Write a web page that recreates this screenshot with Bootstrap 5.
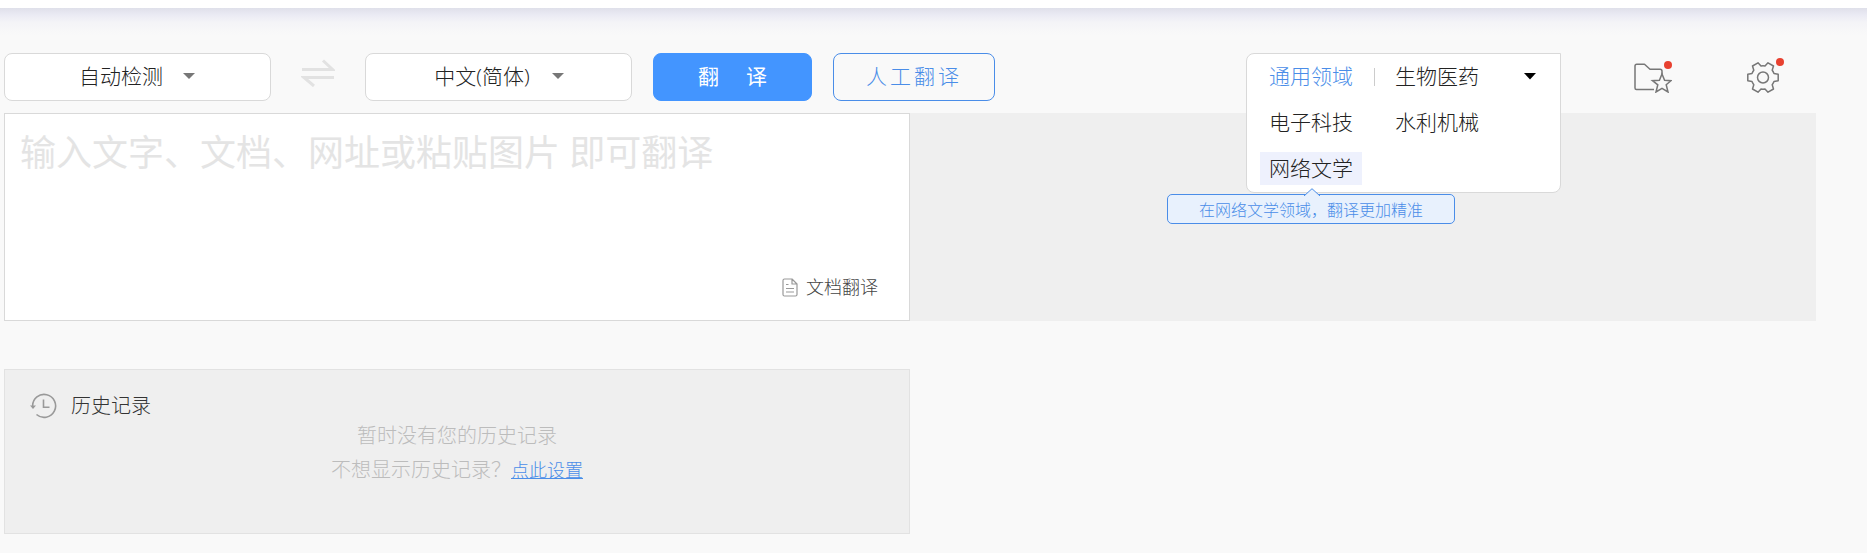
<!DOCTYPE html>
<html lang="zh-CN">
<head>
<meta charset="utf-8">
<meta name="viewport" content="width=device-width, initial-scale=1">
<title>在线翻译</title>
<link href="https://cdn.jsdelivr.net/npm/bootstrap@5.3.0/dist/css/bootstrap.min.css" rel="stylesheet">
<style>
body { background: #f9f9f9; color: #333; font-family: "Open Sans", "Noto Sans CJK SC", sans-serif; font-weight: 300; font-size: 21px; line-height: 28px; }
.top-strip { height: 8px; background: #fff; }
.top-shade { height: 45px; background: linear-gradient(#dfe0ea, #ebebf4 16%, #f4f4f7 32%, #f9f9f9 60%); }
.page-main { padding: 0 51px 16px 4px; }
.toolbar { height: 60px; }
.lang-select { width: 267px; height: 48px; border: 1px solid #d9d9d9; border-radius: 8px; padding: 0 33px 0 0; font-size: 21px; font-weight: 300; color: #222; text-align: center; text-align-last: center; background: #fff url("data:image/svg+xml,%3Csvg xmlns='http://www.w3.org/2000/svg' viewBox='0 0 12 6'%3E%3Cpath d='M0 0h12L6 6z' fill='%23777'/%3E%3C/svg%3E") no-repeat right 75px top 19px / 12px 6px; }
.lang-target { background-position: right 67px top 19px; }
.swap-btn { width: 94px; height: 48px; padding: 0 0 8px; border: 0; background: none; line-height: 0; }
.go-btn, .human-btn { height: 48px; border-radius: 8px; padding: 0; font-size: 21px; font-weight: 400; }
.go-btn { width: 159px; margin-left: 21px; background: #4395ff; border-color: #4395ff; color: #fff; }
.go-btn .gap-wide { gap: 27px; }
.human-btn { width: 162px; margin-left: 21px; border-color: #4a8de8; color: #4a8de8; font-weight: 300; letter-spacing: 3px; }
.domain { width: 315px; height: 48px; margin-right: 73px; }
.domain-panel { z-index: 5; width: 100%; height: 140px; background: #fff; border: 1px solid #d9d9d9; border-radius: 8px 0 8px 8px; padding: 6px 12px 6px 13px; }
.domain-grid { display: grid; grid-template-columns: 102px 24px 102px 1fr; row-gap: 13px; align-items: center; }
.domain-grid a { color: #222; text-decoration: none; text-align: center; line-height: 33px; }
.domain-grid a.active { color: #4a8de8; }
.domain-grid a.hovered { background: #eef1fd; }
.bar-sep { width: 1px; height: 18px; background: #ccc; justify-self: center; }
.open-btn { border: 0; padding: 0; background: none; line-height: 0; justify-self: end; margin-right: 12px; }
.domain-tip { z-index: 6; top: 141px; left: -79px; width: 288px; height: 30px; border: 1px solid #4a8de8; border-radius: 5px; background: #e8f1fd; color: #4a8de8; font-size: 16px; line-height: 30px; text-align: center; }
.domain-tip svg { top: -7px; left: 135px; }
.tool-btn { border: 0; padding: 0; background: none; line-height: 0; }
.fav-btn { margin-right: 75px; }
.set-btn { margin-right: 37px; }
.red-dot { width: 8px; height: 8px; border-radius: 50%; background: #e84130; }
.fav-btn .red-dot { top: 0; right: 0; }
.set-btn .red-dot { top: -3px; right: -5px; }
.source-pane { background: #fff; border: 1px solid #d9d9d9; }
.source-pane textarea { height: 149px; resize: none; border: 0; background: none; padding: 14px 15px; font-size: 36px; line-height: 50px; font-weight: 300; }
.source-pane textarea::placeholder { color: #e4e4e4; opacity: 1; font-weight: 400; }
.doc-link { font-size: 18px; color: #444; margin-right: 31px; gap: 8px; padding: 10px 0 19px; }
.target-pane { background: #efefef; }
.history { margin-top: 48px; height: 165px; background: #efefef; border: 1px solid #e2e2e2; padding-top: 23px; }
.history h2 { font-size: 20px; line-height: 26px; font-weight: 300; color: #333; margin: 0 0 0 25px; gap: 14px; }
.history p { font-size: 20px; line-height: 34px; margin: 0; color: #bcbcbc; }
.history p a { font-size: 18px; color: #4a8de8; }
</style>
</head>
<body>
<div class="top-strip"></div>
<div class="top-shade"></div>
<main class="page-main">
  <div class="toolbar d-flex align-items-start">
    <select class="form-select lang-select" aria-label="源语言"><option>自动检测</option></select>
    <button type="button" class="swap-btn" aria-label="交换语言">
      <svg width="34" height="28" viewBox="0 0 34 28" fill="none" stroke="#e2e2e2" stroke-width="3"><path d="M1 10.500H31.500L22 1.500M33 18.500H3L13 27"/></svg>
    </button>
    <select class="form-select lang-select lang-target flex-shrink-0" aria-label="目标语言"><option>中文(简体)</option></select>
    <button type="button" class="btn go-btn"><span class="d-flex justify-content-center gap-wide"><span>翻</span><span>译</span></span></button>
    <button type="button" class="btn human-btn">人工翻译</button>
    <div class="domain position-relative ms-auto">
      <div class="domain-panel position-absolute">
        <div class="domain-grid">
          <a href="#" class="active">通用领域</a><span class="bar-sep"></span><a href="#">生物医药</a>
          <button type="button" class="open-btn" aria-label="展开领域"><svg width="12" height="7" viewBox="0 0 12 7"><path d="M0 0h12L6 6.500z" fill="#000"/></svg></button>
          <a href="#">电子科技</a><span></span><a href="#">水利机械</a><span></span>
          <a href="#" class="hovered">网络文学</a>
        </div>
      </div>
      <div class="domain-tip position-absolute">在网络文学领域，翻译更加精准
        <svg class="position-absolute" width="18" height="8" viewBox="0 0 18 8"><path d="M1 8L9 .7 17 8" fill="#e8f1fd" stroke="#4a8de8"/></svg>
      </div>
    </div>
    <button type="button" class="tool-btn fav-btn position-relative mt-2" aria-label="收藏夹">
      <svg width="38" height="32" viewBox="0 0 38 32" fill="none" stroke="#777" stroke-width="1.500" stroke-linejoin="round"><path d="M20 28.500H2.500Q1 28.500 1 27V5Q1 3.300 2.700 3.300H10.500L16 8.300H26Q28 8.300 28 10.300V13"/><path d="M28 13L30.600 19.300 37 19.700 32.200 23.800 34 31 28 27.300 22 31 23.800 23.800 18.500 19.700 25.400 19.300Z" stroke-linejoin="miter"/></svg>
      <span class="red-dot position-absolute"></span>
    </button>
    <button type="button" class="tool-btn set-btn position-relative mt-2" aria-label="设置">
      <svg width="32" height="33" viewBox="0 0 32 33" fill="none" stroke="#777" stroke-width="1.500" stroke-linejoin="round"><circle cx="16" cy="16.500" r="5.500"/><path d="M.8 13.200L5 12.500Q5.700 10.700 6.800 9.300L5.500 5 11 1.800 14 5Q16 4.700 18 5L21 1.800 26.500 5 25.200 9.300Q26.300 10.700 27 12.500L31.200 13.200V19.800L27 20.500Q26.300 22.300 25.200 23.700L26.500 28 21 31.200 18 28Q16 28.300 14 28L11 31.200 5.500 28 6.800 23.700Q5.700 22.300 5 20.500L.8 19.800Z"/></svg>
      <span class="red-dot position-absolute"></span>
    </button>
  </div>

  <div class="row g-0">
    <div class="col-6 source-pane d-flex flex-column">
      <textarea class="form-control shadow-none" placeholder="输入文字、文档、网址或粘贴图片 即可翻译" aria-label="原文"></textarea>
      <a href="#" class="doc-link d-flex align-items-center align-self-end text-decoration-none">
        <svg width="16" height="19" viewBox="0 0 16 19" fill="none" stroke="#999" stroke-width="1.200" stroke-linejoin="round"><path d="M2.500 1H10L15 6V16.500Q15 18 13.500 18H2.500Q1 18 1 16.500V2.500Q1 1 2.500 1ZM10 1V6H15M4 6.500H6.500M4 10.500H12M4 14H12"/></svg>
        <span>文档翻译</span>
      </a>
    </div>
    <div class="col-6 target-pane"></div>
  </div>

  <div class="row g-0">
    <section class="col-6 history">
      <h2 class="d-flex align-items-center">
        <svg width="27" height="26" viewBox="0 0 27 26" fill="none" stroke="#999" stroke-width="1.600"><path d="M2.600 13A11.500 11.500 0 1 1 6.500 21.500"/><path d="M13.500 6.500V14.200H19.500"/><path d="M0 12.500H6L3 16Z" fill="#999" stroke="none"/></svg>
        <span>历史记录</span>
      </h2>
      <div class="text-center">
        <p>暂时没有您的历史记录</p>
        <p>不想显示历史记录？<a href="#">点此设置</a></p>
      </div>
    </section>
  </div>
</main>
<script src="https://cdn.jsdelivr.net/npm/bootstrap@5.3.0/dist/js/bootstrap.bundle.min.js"></script>
</body>
</html>
